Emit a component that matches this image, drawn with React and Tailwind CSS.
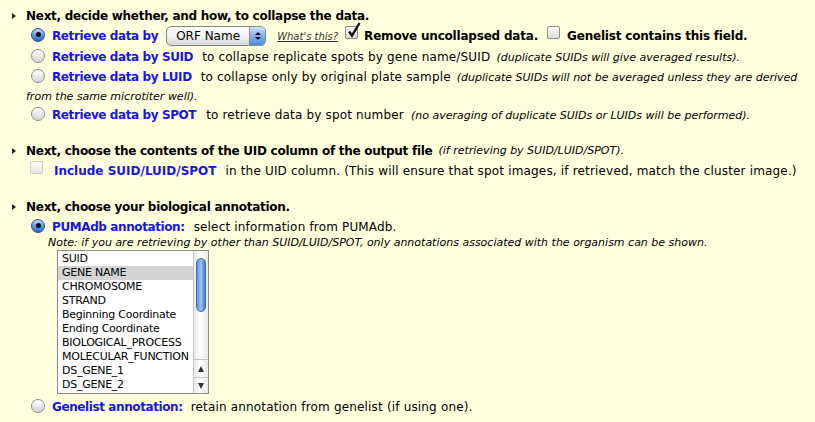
import React from 'react';

const font = "font-['DejaVu_Sans',sans-serif]";

const Arrow = () => (
  <span className="inline-block w-0 h-0 border-y-[3.5px] border-y-transparent border-l-[4px] border-l-[#222] ml-[12px] mr-[10px]" />
);

const Radio = ({ checked }) => (
  <span
    className={`inline-flex shrink-0 w-[14px] h-[14px] rounded-full border items-center justify-center -mt-[3px] ${
      checked
        ? 'border-[#2d4f86] bg-linear-to-b from-[#bcdcfb] via-[#5d9be6] to-[#2a6bcc]'
        : 'border-[#8d8d8d] bg-linear-to-b from-white to-[#d6d6d6]'
    }`}
  >
    {checked && <span className="w-[5px] h-[5px] rounded-full bg-[#111]" />}
  </span>
);

const Checkbox = ({ checked, faded }) => (
  <span
    className={`relative inline-block shrink-0 w-[13px] h-[13px] rounded-[2px] border bg-linear-to-b from-white to-[#dcdcdc] ${
      faded ? 'border-[#b8b8b8] opacity-70' : 'border-[#8d8d8d]'
    }`}
  >
    {checked && (
      <svg className="absolute -top-[5px] left-[1px]" width="14" height="16" viewBox="0 0 14 16">
        <path d="M2 9.5 L5 13.5 L12.5 1" fill="none" stroke="#111" strokeWidth="2.4" />
      </svg>
    )}
  </span>
);

const Select = () => (
  <span className="inline-flex items-center w-[100px] h-[20px] rounded-[5px] border border-[#8a8a8a] bg-linear-to-b from-white via-[#f2f2f2] to-[#d9d9d9] overflow-hidden">
    <span className="flex-1 pl-[9px] text-[12px] text-black font-normal">ORF Name</span>
    <span className="w-[16px] h-full border-l border-[#8a8a8a] bg-linear-to-b from-[#cfe4fb] via-[#7fb1ec] to-[#4d8ee0] flex flex-col items-center justify-center gap-[2px]">
      <span className="w-0 h-0 border-x-[3px] border-x-transparent border-b-[3px] border-b-[#111]" />
      <span className="w-0 h-0 border-x-[3px] border-x-transparent border-t-[3px] border-t-[#111]" />
    </span>
  </span>
);

const items = [
  'SUID',
  'GENE NAME',
  'CHROMOSOME',
  'STRAND',
  'Beginning Coordinate',
  'Ending Coordinate',
  'BIOLOGICAL_PROCESS',
  'MOLECULAR_FUNCTION',
  'DS_GENE_1',
  'DS_GENE_2',
];

const ListBox = () => (
  <div className="ml-[57px] mt-[1px] flex w-[152px] h-[144px] border border-[#8c8c8c] bg-white">
    <div className="flex-1 pt-[1px] overflow-hidden">
      {items.map((it, i) => (
        <div
          key={it}
          className={`h-[14px] leading-[14px] pl-[4px] text-[11px] tracking-[-0.25px] text-black whitespace-nowrap ${i === 1 ? 'bg-[#d4d4d4]' : ''}`}
        >
          {it}
        </div>
      ))}
    </div>
    <div className="w-[15px] border-l border-[#c4c4c4] flex flex-col bg-linear-to-r from-[#e9e9e9] via-white to-[#e9e9e9]">
      <div className="flex-1 pt-[7px] px-[2px]">
        <div className="h-[54px] rounded-full border border-[#3f6db5] bg-linear-to-r from-[#5c93dd] via-[#9cc6f4] to-[#3d7ad3]" />
      </div>
      <div className="h-[18px] border-t border-[#c4c4c4] flex items-center justify-center">
        <span className="w-0 h-0 border-x-[3.5px] border-x-transparent border-b-[6px] border-b-[#333]" />
      </div>
      <div className="h-[16px] border-t border-[#c4c4c4] flex items-center justify-center">
        <span className="w-0 h-0 border-x-[3.5px] border-x-transparent border-t-[6px] border-t-[#333]" />
      </div>
    </div>
  </div>
);

const Blue = ({ children, wide }) => (
  <span className={`font-bold text-[#1515e6] ${wide ? 'tracking-[0px]' : 'tracking-[-0.4px]'}`}>{children}</span>
);
const Plain = ({ children }) => <span className="tracking-[0.17px]">{children}</span>;
const Note = ({ children }) => <span className="italic text-[11px]">{children}</span>;
const Head = ({ children }) => <span className="font-bold text-[12px] tracking-[-0.27px]">{children}</span>;

export default function App() {
  return (
    <div className={`w-[815px] h-[422px] bg-[#ffffdd] text-black text-[12px] overflow-hidden ${font}`}>
      <div className="pt-[7px]">
        <div className="flex items-center h-[17px]">
          <Arrow />
          <Head>Next, decide whether, and how, to collapse the data.</Head>
        </div>

        <div className="flex items-center h-[22px] mt-[1px] pl-[31px] whitespace-nowrap">
          <Radio checked />
          <span className="ml-[7px]"><Blue>Retrieve data by</Blue></span>
          <span className="ml-[8px]"><Select /></span>
          <span className="ml-[11px] text-[10px] italic underline text-[#333]">What's this?</span>
          <span className="ml-[7px] -mt-[3px]"><Checkbox checked /></span>
          <span className="ml-[6px] font-bold tracking-[-0.2px]">Remove uncollapsed data.</span>
          <span className="ml-[9px] -mt-[3px]"><Checkbox /></span>
          <span className="ml-[7px] font-bold tracking-[-0.2px]">Genelist contains this field.</span>
        </div>

        <div className="flex items-center h-[20px] pl-[31px] whitespace-nowrap">
          <Radio />
          <span className="ml-[7px]"><Blue>Retrieve data by SUID</Blue></span>
          <span className="ml-[9px]"><Plain>to collapse replicate spots by gene name/SUID</Plain></span>
          <span className="ml-[6px]"><Note>(duplicate SUIDs will give averaged results).</Note></span>
        </div>

        <div className="flex items-center h-[20px] pl-[31px] whitespace-nowrap">
          <Radio />
          <span className="ml-[7px]"><Blue>Retrieve data by LUID</Blue></span>
          <span className="ml-[9px]"><Plain>to collapse only by original plate sample</Plain></span>
          <span className="ml-[6px]"><Note>(duplicate SUIDs will not be averaged unless they are derived</Note></span>
        </div>
        <div className="h-[17px] mt-[2px] pl-[26px] flex items-center">
          <Note>from the same microtiter well).</Note>
        </div>

        <div className="flex items-center h-[20px] -mt-[1px] pl-[31px] whitespace-nowrap">
          <Radio />
          <span className="ml-[7px]"><Blue>Retrieve data by SPOT</Blue></span>
          <span className="ml-[10px]"><Plain>to retrieve data by spot number</Plain></span>
          <span className="ml-[7px]"><Note>(no averaging of duplicate SUIDs or LUIDs will be performed).</Note></span>
        </div>
      </div>

      <div className="mt-[17px]">
        <div className="flex items-center h-[17px] whitespace-nowrap">
          <Arrow />
          <Head>Next, choose the contents of the UID column of the output file</Head>
          <span className="ml-[6px]"><Note>(if retrieving by SUID/LUID/SPOT).</Note></span>
        </div>
        <div className="flex items-center h-[22px] mt-[1px] pl-[30px] whitespace-nowrap">
          <span className="-mt-[3px]"><Checkbox faded /></span>
          <span className="ml-[11px]"><Blue wide>Include SUID/LUID/SPOT</Blue></span>
          <span className="ml-[9px]"><Plain>in the UID column. (This will ensure that spot images, if retrieved, match the cluster image.)</Plain></span>
        </div>
      </div>

      <div className="mt-[16px]">
        <div className="flex items-center h-[18px]">
          <Arrow />
          <Head>Next, choose your biological annotation.</Head>
        </div>
        <div className="flex items-center h-[20px] mt-[1px] pl-[31px] whitespace-nowrap">
          <Radio checked />
          <span className="ml-[7px]"><Blue>PUMAdb annotation:</Blue></span>
          <span className="ml-[9px]"><Plain>select information from PUMAdb.</Plain></span>
        </div>
        <div className="h-[12px] pl-[48px] flex items-center whitespace-nowrap">
          <Note>Note: if you are retrieving by other than SUID/LUID/SPOT, only annotations associated with the organism can be shown.</Note>
        </div>
        <ListBox />
        <div className="flex items-center h-[22px] mt-[2px] pl-[31px] whitespace-nowrap">
          <Radio />
          <span className="ml-[7px]"><Blue>Genelist annotation:</Blue></span>
          <span className="ml-[8px]"><Plain>retain annotation from genelist (if using one).</Plain></span>
        </div>
      </div>
    </div>
  );
}
